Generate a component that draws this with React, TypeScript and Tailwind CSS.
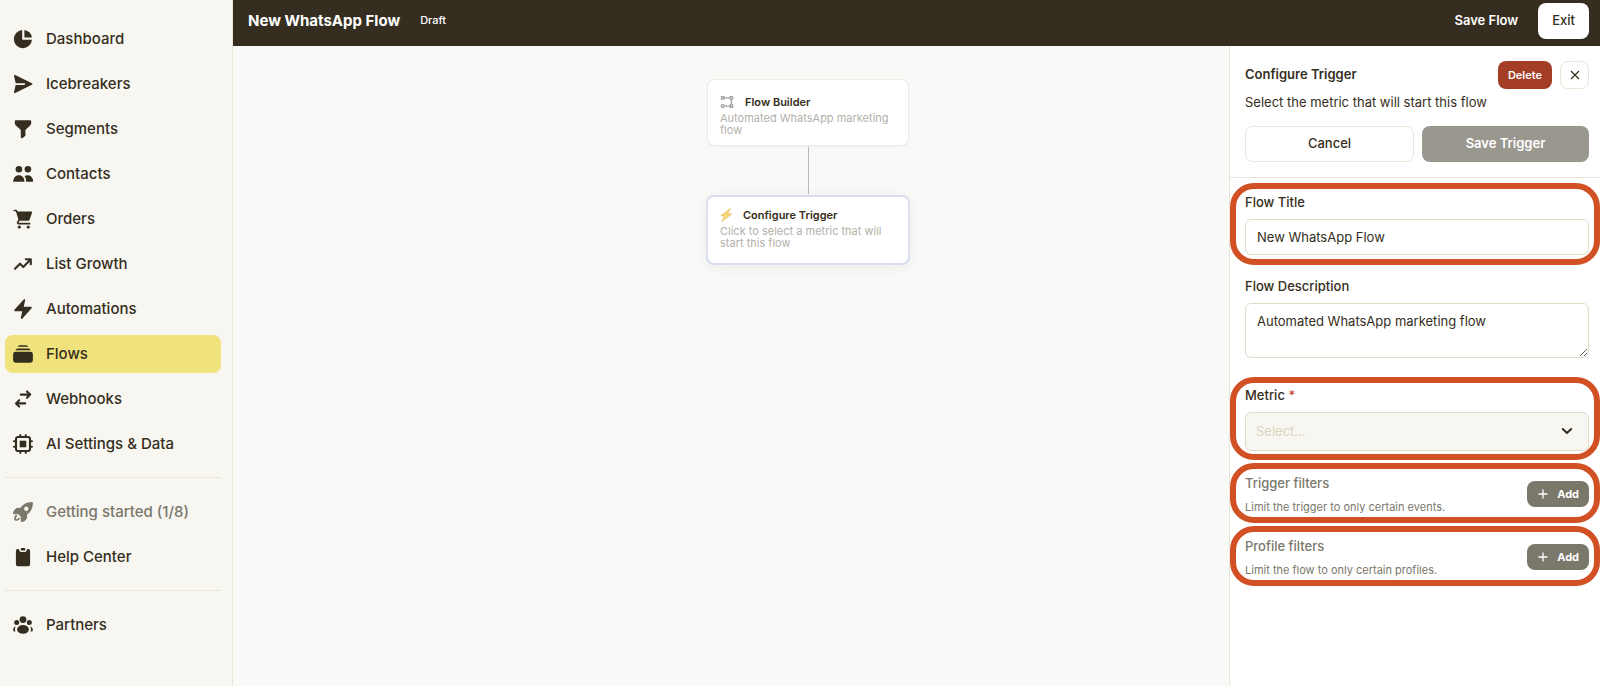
import { useState } from 'react'
import type { ReactNode } from 'react'
import { HiMiniBolt, HiMiniRectangleStack, HiMiniRocketLaunch } from 'react-icons/hi2'

const PieIcon = () => (
  <svg viewBox="0 0 20 20" className="size-5" fill="currentColor">
    <path d="M9.2 1A9.1 9.1 0 1 0 19 10.8H9.8a.6.6 0 0 1-.6-.6Z" />
    <path d="M11.4.9v7.2c0 .3.2.5.5.5h7A9 9 0 0 0 11.4.9Z" />
  </svg>
)

const SendIcon = () => (
  <svg viewBox="0 0 20 20" className="size-5" fill="currentColor">
    <path d="M2.2 1 18.9 9.2c.7.4.7 1.3 0 1.6L2.2 19c-.7.3-1.4-.3-1.2-1l1.7-7.1h8.6a.8.8 0 0 0 0-1.7H2.7L1 2c-.2-.7.5-1.3 1.2-1Z" />
  </svg>
)

const FunnelIcon = () => (
  <svg viewBox="0 0 20 20" className="size-5" fill="currentColor">
    <path d="M3 1.2h14c.7 0 1.2.5 1.2 1.2v1.9c0 .9-.4 1.7-1.1 2.3l-4 3.6c-.5.4-.7 1-.7 1.6v4.4c0 .5-.2.9-.6 1.1l-2.6 1.9c-.6.4-1.4 0-1.4-.7v-6.7c0-.6-.3-1.2-.7-1.6L2.900 6.600C2.200 6 1.800 5.200 1.800 4.300V2.400c0-.7.5-1.200 1.200-1.200Z" />
  </svg>
)

const ContactsIcon = () => (
  <svg viewBox="0 0 20 20" className="size-5" fill="currentColor">
    <circle cx="5.9" cy="5.3" r="3.3" />
    <circle cx="14.9" cy="5.3" r="3.3" />
    <path d="M.2 17.8c0-4 2.4-6.6 5.700-6.600s5.600 2.600 5.600 6.600Z" />
    <path d="M13.200 17.800c0-2.400-.6-4.500-1.700-5.900.9-.5 2.100-.7 3.200-.7 3.200 0 5.500 2.600 5.500 6.600Z" />
  </svg>
)

const CartIcon = () => (
  <svg viewBox="0 0 20 20" className="size-5">
    <path
      d="M1.300 1.500h1.300c.6 0 1 .3 1.200.9l2.500 8.200-1.500 2.600c-.4.700 0 1.400.8 1.400h11"
      fill="none"
      stroke="currentColor"
      strokeWidth="1.7"
      strokeLinecap="round"
      strokeLinejoin="round"
    />
    <path
      d="M3.800 2.600h14.400c.6 0 1 .6.800 1.200l-2.500 7.100c-.2.500-.6.800-1.200.800H6.300Z"
      fill="currentColor"
    />
    <circle cx="6.300" cy="18" r="1.600" fill="currentColor" />
    <circle cx="15.200" cy="18" r="1.600" fill="currentColor" />
  </svg>
)

const TrendIcon = () => (
  <svg
    viewBox="0 0 20 20"
    className="size-5"
    fill="none"
    stroke="currentColor"
    strokeWidth="2.1"
    strokeLinecap="round"
    strokeLinejoin="round"
  >
    <path d="M2 14.800 7 9.700l3.300 3.300 7-7.300M12.800 5.200h5v5" />
  </svg>
)

const SwapIcon = () => (
  <svg
    viewBox="0 0 20 20"
    className="size-5"
    fill="none"
    stroke="currentColor"
    strokeWidth="2.1"
    strokeLinecap="round"
    strokeLinejoin="round"
  >
    <path d="M7.800 5.600H17M14 2.400l3.200 3.200L14 8.800M12.200 14.400H3.200M6.200 11.200 3 14.400l3.200 3.200" />
  </svg>
)

const ChipIcon = () => (
  <svg
    viewBox="0 0 20 20"
    className="size-5"
    fill="none"
    stroke="currentColor"
    strokeWidth="1.9"
    strokeLinecap="round"
  >
    <rect x="3" y="3" width="14" height="14" rx="2" strokeWidth="2.1" />
    <path d="M7.300 1v1.500M12.700 1v1.500M7.300 17.500V19M12.700 17.500V19M1 7.300h1.500M1 12.700h1.500M17.500 7.300H19M17.500 12.700H19" />
    <rect x="6.700" y="6.700" width="6.600" height="6.600" fill="currentColor" stroke="none" />
  </svg>
)

const ClipboardIcon = () => (
  <svg viewBox="0 0 20 20" className="size-5" fill="currentColor">
    <path d="M4.900 2h1c.2 2 1.400 3.100 2.900 3.100h2.400c1.500 0 2.700-1.100 2.900-3.100h1c1.100 0 2 .9 2 2v13.200c0 1.100-.9 2-2 2H4.900c-1.100 0-2-.9-2-2V4c0-1.100.9-2 2-2Z" />
    <rect x="7.700" y=".9" width="4.600" height="2.500" rx="1" />
  </svg>
)

const PartnersIcon = () => (
  <svg viewBox="0 0 20 20" className="size-5" fill="currentColor">
    <circle cx="10" cy="4.600" r="3.400" />
    <circle cx="3.700" cy="7.600" r="2.500" />
    <circle cx="16.300" cy="7.600" r="2.500" />
    <ellipse cx="10" cy="14.400" rx="5.900" ry="4.400" />
    <path d="M2.800 11.300c-1.800.6-2.800 2.200-2.600 4.300 0 .6.900 1 2.200 1.100-.7-1.900-.5-3.800.4-5.400ZM17.200 11.300c1.800.6 2.800 2.200 2.600 4.300 0 .6-.9 1-2.200 1.100.7-1.900.5-3.800-.4-5.400Z" />
  </svg>
)

interface NavItem {
  label: string
  icon: ReactNode
  active?: boolean
  muted?: boolean
}

// the heroicons leave more room round the glyph than the ones above
const HERO_ICON = '-mx-px size-[22px]'

const NAV_GROUPS: NavItem[][] = [
  [
    { label: 'Dashboard', icon: <PieIcon /> },
    { label: 'Icebreakers', icon: <SendIcon /> },
    { label: 'Segments', icon: <FunnelIcon /> },
    { label: 'Contacts', icon: <ContactsIcon /> },
    { label: 'Orders', icon: <CartIcon /> },
    { label: 'List Growth', icon: <TrendIcon /> },
    { label: 'Automations', icon: <HiMiniBolt className={HERO_ICON} /> },
    { label: 'Flows', icon: <HiMiniRectangleStack className={HERO_ICON} />, active: true },
    { label: 'Webhooks', icon: <SwapIcon /> },
    { label: 'AI Settings & Data', icon: <ChipIcon /> },
  ],
  [
    {
      label: 'Getting started (1/8)',
      icon: <HiMiniRocketLaunch className={HERO_ICON} />,
      muted: true,
    },
    { label: 'Help Center', icon: <ClipboardIcon /> },
  ],
  [{ label: 'Partners', icon: <PartnersIcon /> }],
]

const Sidebar = () => (
  <nav className="w-[233px] shrink-0 border-r border-[#e9e7d8] bg-[#f7f6f1] pt-5 pr-[11px] pl-[5px]">
    {NAV_GROUPS.map((group, index) => (
      <ul
        key={group[0].label}
        className={`flex flex-col gap-[7px] ${index > 0 ? 'mt-[14px] border-t border-[#e9e7d8] pt-[15px]' : ''}`}
      >
        {group.map(({ label, icon, active, muted }) => (
          <li key={label}>
            <a
              href="#"
              aria-current={active ? 'page' : undefined}
              className={`flex h-[38px] items-center gap-[13px] rounded-lg pl-2 text-[15px] font-medium ${
                active ? 'bg-[#f0e37d]' : ''
              } ${muted ? 'text-[#7a776b]' : 'text-[#352e20]'}`}
            >
              {icon}
              {label}
            </a>
          </li>
        ))}
      </ul>
    ))}
  </nav>
)

const TopBar = () => (
  <header className="flex h-[46px] shrink-0 items-center bg-[#352e20] pr-[11px] pb-[5px] pl-[15px] text-white">
    <h1 className="text-[15px] leading-6 font-bold">New WhatsApp Flow</h1>
    <span className="ml-5 text-[11px] font-medium">Draft</span>
    <button className="mr-5 ml-auto text-[13px] font-semibold">Save Flow</button>
    <button className="h-[36px] rounded-lg bg-white px-[14px] text-[13px] font-medium text-[#352e20]">
      Exit
    </button>
  </header>
)

const FlowGlyph = () => (
  <svg
    viewBox="0 0 14 14"
    className="size-[14px] text-[#a09e98]"
    fill="none"
    stroke="currentColor"
    strokeWidth="1.3"
  >
    <rect x="1.500" y="1.700" width="2.400" height="2.400" />
    <circle cx="11.400" cy="2.900" r="1.400" />
    <circle cx="2.700" cy="11.100" r="1.400" />
    <rect x="10.200" y="9.900" width="2.400" height="2.400" />
    <path d="M3.900 2.900H10M11.400 4.300v5.600M4.100 11.100h6.100" />
  </svg>
)

const BoltGlyph = () => (
  <svg viewBox="0 0 12 14" className="h-[14px] w-[12px]">
    <path
      d="M10.400.5 1 7.700 5 8 1.700 13.500 11.500 6 7.400 5.700Z"
      fill="#fbdc74"
      stroke="#e6b95c"
      strokeWidth=".8"
      strokeLinejoin="round"
    />
  </svg>
)

interface FlowNodeProps {
  title: string
  description: string
  icon: ReactNode
  selected?: boolean
}

const FlowNode = ({ title, description, icon, selected }: FlowNodeProps) => (
  <article
    className={`bg-white px-3 ${
      selected
        ? 'h-[70px] w-[204px] rounded-lg border-2 border-[#dadff0] pt-[10px] shadow-[0_2px_14px_rgba(0,0,0,0.06)]'
        : 'h-[67px] w-[202px] rounded-lg border border-[#ecebe7] pt-[14px] shadow-xs shadow-black/5'
    }`}
  >
    <h2 className="flex h-4 items-center gap-[11px] text-[11px] font-semibold text-[#352e20]">
      {icon}
      {title}
    </h2>
    <p className="mt-[2px] text-[11px] leading-3 text-[#b3b1aa]">{description}</p>
  </article>
)

const Canvas = () => (
  <main className="relative flex-1 bg-[#f9f9f7]">
    <div className="absolute top-[33px] left-[473px] flex flex-col items-center">
      <FlowNode
        title="Flow Builder"
        description="Automated WhatsApp marketing flow"
        icon={<FlowGlyph />}
      />
      <div className="my-px h-[47px] w-px bg-[#b9b9bb]" />
      <FlowNode
        selected
        title="Configure Trigger"
        description="Click to select a metric that will start this flow"
        icon={<BoltGlyph />}
      />
    </div>
  </main>
)

const FilterRow = ({ title, hint }: { title: string; hint: string }) => (
  <section className="mt-[3px] flex h-[60px] items-center justify-between rounded-[24px] border-[6px] border-[#d15124] pt-[2px] pr-[5px] pl-[9px]">
    <div className="pt-[2px] text-[#7a776b]">
      <h3 className="text-[13px] leading-5 font-medium">{title}</h3>
      <p className="mt-1 text-[11px] leading-5">{hint}</p>
    </div>
    <button className="flex h-[26px] items-center gap-2 rounded-lg bg-[#7a776b] px-[10px] text-[11px] font-bold text-white">
      <svg viewBox="0 0 12 12" className="size-3" stroke="currentColor" strokeWidth="1.3">
        <path d="M6 1.500v9M1.500 6h9" />
      </svg>
      Add
    </button>
  </section>
)

const TriggerPanel = () => {
  const [title, setTitle] = useState('New WhatsApp Flow')
  const [description, setDescription] = useState('Automated WhatsApp marketing flow')

  return (
    <aside className="w-[371px] shrink-0 border-l border-[#e9e7d8] bg-white text-[13px] text-[#352e20]">
      <div className="border-b border-[#e9e7d8] pt-[15px] pr-[11px] pb-[15px] pl-[15px]">
        <div className="flex items-center">
          <h2 className="mr-auto font-semibold">Configure Trigger</h2>
          <button className="h-[28px] rounded-lg bg-[#a33d26] px-[10px] text-[11px] font-semibold text-white">
            Delete
          </button>
          <button
            aria-label="Close"
            className="ml-2 flex h-[28px] w-[29px] items-center justify-center rounded-lg border border-[#e9e7d8]"
          >
            <svg viewBox="0 0 10 10" className="size-[10px]" stroke="currentColor" strokeWidth="1.2">
              <path d="M1 1l8 8M9 1 1 9" />
            </svg>
          </button>
        </div>
        <p className="mt-[3px] leading-5">Select the metric that will start this flow</p>
        <div className="mt-[14px] flex gap-2">
          <button className="h-[36px] flex-1 rounded-lg border border-[#e9e7d8] font-medium">
            Cancel
          </button>
          <button className="h-[36px] flex-1 rounded-lg bg-[#9a978f] font-semibold text-white">
            Save Trigger
          </button>
        </div>
      </div>

      <form className="pt-[5px]">
        <div className="rounded-[24px] border-[6px] border-[#d15124] pt-[3px] pr-[5px] pb-[4px] pl-[9px]">
          <label htmlFor="flow-title" className="block leading-5 font-medium">
            Flow Title
          </label>
          <input
            id="flow-title"
            className="mt-[7px] block h-[36px] w-full rounded-md border border-[#dedcc8] px-[11px] outline-none"
            value={title}
            onChange={(e) => setTitle(e.target.value)}
          />
        </div>

        <div className="mt-[11px] pr-[11px] pl-[15px]">
          <label htmlFor="flow-description" className="block leading-5 font-medium">
            Flow Description
          </label>
          <textarea
            id="flow-description"
            className="mt-[7px] block h-[55px] w-full resize-y rounded-md border border-[#dedcc8] px-[11px] py-[7px] leading-5 outline-none"
            value={description}
            onChange={(e) => setDescription(e.target.value)}
          />
        </div>

        <div className="mt-[19px] rounded-[24px] border-[6px] border-[#d15124] pt-[2px] pr-[5px] pb-[3px] pl-[9px]">
          <label htmlFor="flow-metric" className="block leading-5 font-medium">
            Metric <span className="text-[#c4453a]">*</span>
          </label>
          <div className="relative mt-[7px]">
            <select
              id="flow-metric"
              disabled
              className="block h-[39px] w-full appearance-none rounded-md border border-[#dedcc8] bg-[#f7f6f1] px-[10px] text-[#d9d6bd] opacity-100"
            >
              <option>Select...</option>
            </select>
            <svg
              viewBox="0 0 12 12"
              className="pointer-events-none absolute top-[13px] right-4 size-3"
              fill="none"
              stroke="currentColor"
              strokeWidth="2"
              strokeLinecap="round"
              strokeLinejoin="round"
            >
              <path d="m1.800 4 4.200 4 4.200-4" />
            </svg>
          </div>
        </div>

        <FilterRow title="Trigger filters" hint="Limit the trigger to only certain events." />
        <FilterRow title="Profile filters" hint="Limit the flow to only certain profiles." />
      </form>
    </aside>
  )
}

export default function App() {
  return (
    <div className="flex min-h-screen font-['Inter',sans-serif]">
      <Sidebar />
      <div className="flex min-w-0 flex-1 flex-col">
        <TopBar />
        <div className="flex flex-1">
          <Canvas />
          <TriggerPanel />
        </div>
      </div>
    </div>
  )
}
